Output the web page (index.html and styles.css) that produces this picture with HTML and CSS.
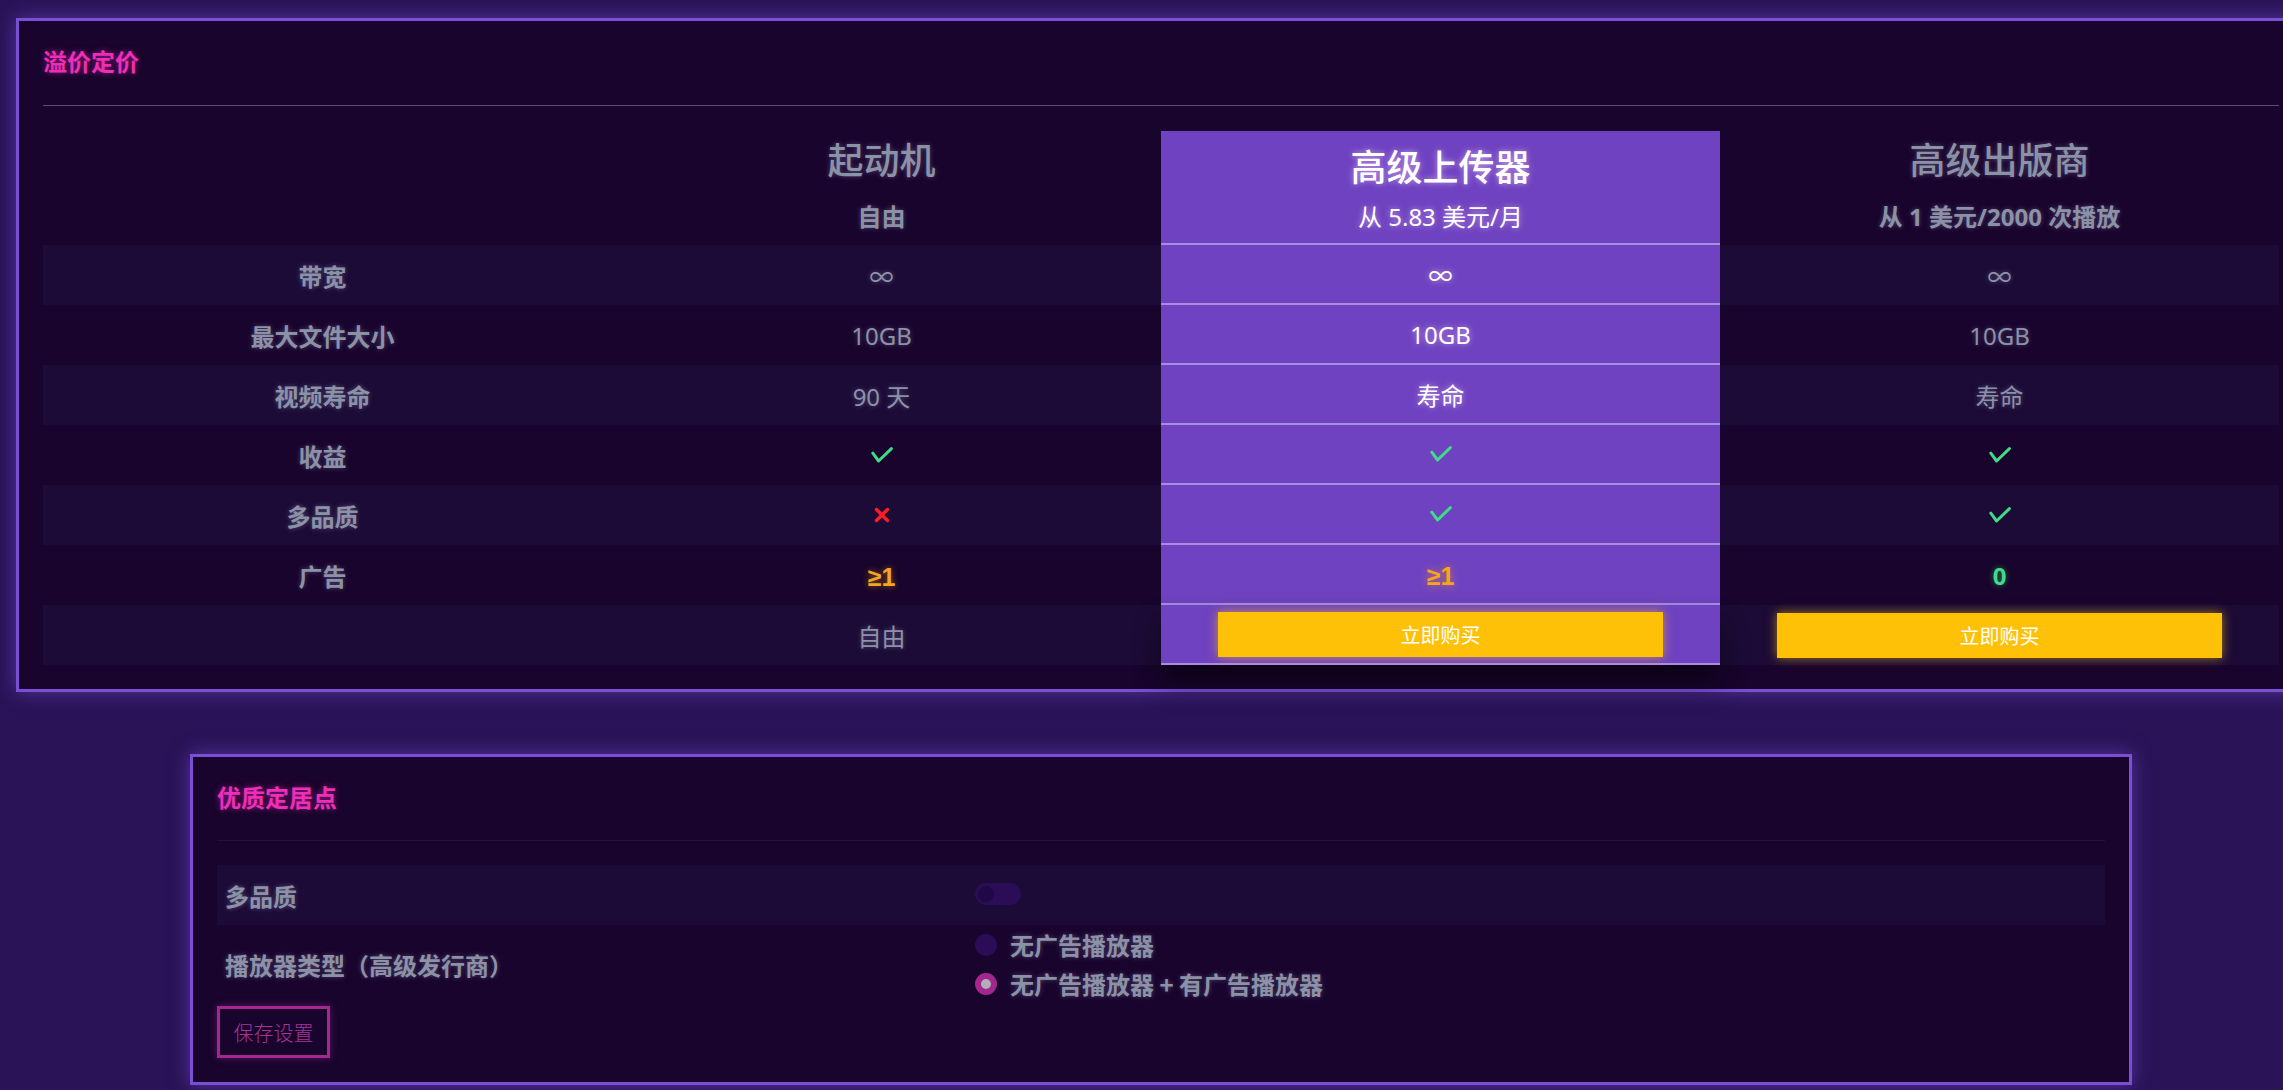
FILE: index.html
```html
<!DOCTYPE html>
<html lang="zh">
<head>
<meta charset="utf-8">
<title>溢价定价</title>
<link rel="stylesheet" href="styles.css">
</head>
<body>
<div class="page">
  <section class="card card-pricing">
    <h2 class="card-title">溢价定价</h2>
    <div class="divider"></div>
    <div class="pricing">
      <div class="prow prow-head">
        <div class="cell"></div>
        <div class="cell head">
          <div class="plan-name">起动机</div>
          <div class="plan-price bold">自由</div>
        </div>
        <div class="cell head hl">
          <div class="plan-name">高级上传器</div>
          <div class="plan-price">从 5.83 美元/月</div>
        </div>
        <div class="cell head">
          <div class="plan-name">高级出版商</div>
          <div class="plan-price bold">从 1 美元/2000 次播放</div>
        </div>
      </div>

      <div class="prow striped">
        <div class="cell label">带宽</div>
        <div class="cell">∞</div>
        <div class="cell hl">∞</div>
        <div class="cell">∞</div>
      </div>
      <div class="prow">
        <div class="cell label">最大文件大小</div>
        <div class="cell">10GB</div>
        <div class="cell hl">10GB</div>
        <div class="cell">10GB</div>
      </div>
      <div class="prow striped">
        <div class="cell label">视频寿命</div>
        <div class="cell">90 天</div>
        <div class="cell hl">寿命</div>
        <div class="cell">寿命</div>
      </div>
      <div class="prow">
        <div class="cell label">收益</div>
        <div class="cell"><svg class="ico-check" viewBox="0 0 22 16"><polyline points="1.8,6.2 7.6,14 20.4,1.6"/></svg></div>
        <div class="cell hl"><svg class="ico-check" viewBox="0 0 22 16"><polyline points="1.8,6.2 7.6,14 20.4,1.6"/></svg></div>
        <div class="cell"><svg class="ico-check" viewBox="0 0 22 16"><polyline points="1.8,6.2 7.6,14 20.4,1.6"/></svg></div>
      </div>
      <div class="prow striped">
        <div class="cell label">多品质</div>
        <div class="cell"><svg class="ico-x" viewBox="0 0 16 16"><path d="M2.5 2.5 L13.5 13.5 M13.5 2.5 L2.5 13.5"/></svg></div>
        <div class="cell hl"><svg class="ico-check" viewBox="0 0 22 16"><polyline points="1.8,6.2 7.6,14 20.4,1.6"/></svg></div>
        <div class="cell"><svg class="ico-check" viewBox="0 0 22 16"><polyline points="1.8,6.2 7.6,14 20.4,1.6"/></svg></div>
      </div>
      <div class="prow">
        <div class="cell label">广告</div>
        <div class="cell ads-warn">≥1</div>
        <div class="cell hl ads-warn">≥1</div>
        <div class="cell ads-ok">0</div>
      </div>
      <div class="prow striped last">
        <div class="cell"></div>
        <div class="cell">自由</div>
        <div class="cell hl"><button class="buy">立即购买</button></div>
        <div class="cell"><button class="buy">立即购买</button></div>
      </div>
    </div>
  </section>

  <section class="card card-settings">
    <h2 class="card-title">优质定居点</h2>
    <div class="divider faint"></div>
    <div class="srow striped">
      <div class="slabel">多品质</div>
      <div class="scontrol"><span class="toggle"><span class="knob"></span></span></div>
    </div>
    <div class="srow">
      <div class="slabel">播放器类型（高级发行商）</div>
      <div class="scontrol radios">
        <label class="radio"><span class="dot"></span>无广告播放器</label>
        <label class="radio"><span class="dot checked"></span>无广告播放器 + 有广告播放器</label>
      </div>
    </div>
    <button class="save">保存设置</button>
  </section>
</div>
</body>
</html>
```

FILE: styles.css
```css
html, body {
  margin: 0;
  padding: 0;
  overflow: hidden;
  height: 100%;
}

body {
  background: #2a1357;
  font-family: "Noto Sans", "Noto Sans CJK SC", sans-serif;
  color: #8b92a6;
}

.page {
  width: 2290px;
  margin-left: 16px;
  padding-top: 18px;
}

.card {
  box-sizing: border-box;
  background: #18042c;
  border: 3px solid #7a4fd4;
  box-shadow: 0 0 18px rgba(120, 80, 220, 0.55);
  padding: 22px 24px 24px;
}

.card-pricing {
  width: 2290px;
}

.card-settings {
  width: 1942px;
  margin: 62px auto 0;
}

.card-title {
  margin: 0;
  font-family: "Noto Sans CJK SC", sans-serif;
  font-size: 24px;
  line-height: 36px;
  font-weight: 700;
  color: #ee2db8;
  text-shadow: 0 0 6px rgba(238, 45, 184, 0.55);
}

.divider {
  height: 1px;
  background: rgba(255, 255, 255, 0.3);
  margin: 26px 0 25px;
}

.divider.faint {
  background: rgba(255, 255, 255, 0.06);
  margin: 25px 0 24px;
}

/* pricing table */
.pricing {
  width: 2236px;
}

.prow {
  display: grid;
  grid-template-columns: repeat(4, 559px);
  height: 60px;
}

.prow-head {
  height: 114px;
}

.striped {
  background: #1c0b36;
}

.cell {
  box-sizing: border-box;
  display: flex;
  align-items: center;
  justify-content: center;
  font-size: 24px;
  color: #8b92a6;
  text-shadow: 0 0 5px rgba(190, 190, 240, 0.35);
}

.cell.label {
  font-family: "Noto Sans CJK SC", sans-serif;
  font-weight: 700;
}

.cell.head {
  flex-direction: column;
  justify-content: flex-start;
  padding-top: 5px;
}

.plan-name {
  font-family: "Noto Sans CJK SC", sans-serif;
  font-size: 36px;
  line-height: 44px;
  font-weight: 500;
}

.plan-price {
  font-size: 24px;
  line-height: 36px;
  margin-top: 19px;
}

.plan-price.bold {
  font-weight: 700;
}

.cell.hl {
  background: #6f42c1;
  color: #ffffff;
  border-bottom: 2px solid #a88de0;
  text-shadow: 0 0 6px rgba(255, 220, 255, 0.6);
}

.cell.head.hl {
  padding-top: 12px;
}

.cell.head.hl .plan-price {
  margin-top: 12px;
}

.last .cell.hl {
  box-shadow: 0 18px 28px rgba(0, 0, 0, 0.45);
}

.ico-check {
  width: 22px;
  height: 16px;
  fill: none;
  stroke: #3fdc85;
  stroke-width: 3;
  stroke-linecap: round;
  stroke-linejoin: round;
}

.ico-x {
  width: 16px;
  height: 16px;
  fill: none;
  stroke: #ff1c24;
  stroke-width: 3.4;
  stroke-linecap: round;
}

.ads-warn {
  font-family: "Liberation Sans", sans-serif;
  font-size: 25px;
  color: #f7a51c;
  font-weight: 700;
  padding-top: 4px;
  text-shadow: 0 0 6px rgba(247, 165, 28, 0.55);
}

.cell.hl.ads-warn {
  color: #f7a51c;
  text-shadow: 0 0 8px rgba(247, 165, 28, 0.6);
}

.ads-ok {
  color: #3fdc85;
  font-weight: 700;
  text-shadow: 0 0 6px rgba(63, 220, 133, 0.5);
}

.buy {
  width: 445px;
  height: 45px;
  border: none;
  background: #ffc107;
  color: #ffffff;
  font-family: "Noto Sans CJK SC", sans-serif;
  font-size: 20px;
  box-shadow: 0 0 10px rgba(255, 193, 7, 0.6);
  cursor: pointer;
}

/* settings */
.srow {
  display: grid;
  grid-template-columns: 758px 1fr;
  align-items: center;
  min-height: 60px;
}

.slabel {
  padding-left: 8px;
  font-family: "Noto Sans CJK SC", sans-serif;
  font-size: 24px;
  font-weight: 700;
  color: #8b92a6;
  text-shadow: 0 0 5px rgba(190, 190, 240, 0.35);
}

.scontrol {
  display: flex;
  align-items: center;
}

.toggle {
  display: block;
  position: relative;
  width: 46px;
  height: 22px;
  border-radius: 11px;
  background: #2a0d56;
  margin-top: -3px;
}

.knob {
  position: absolute;
  left: 3px;
  top: 3px;
  width: 16px;
  height: 16px;
  border-radius: 50%;
  background: #1f0845;
}

.radios {
  flex-direction: column;
  align-items: flex-start;
}

.radio {
  display: flex;
  align-items: center;
  height: 39px;
  font-family: "Noto Sans CJK SC", sans-serif;
  font-size: 24px;
  font-weight: 700;
  color: #8b92a6;
  text-shadow: 0 0 5px rgba(190, 190, 240, 0.35);
}

.dot {
  box-sizing: border-box;
  width: 22px;
  height: 22px;
  border-radius: 50%;
  background: #2a0d56;
  margin-right: 13px;
  flex: none;
}

.dot.checked {
  background: #b0b0b8;
  border: 6px solid #a3278f;
}

.save {
  margin-top: 3px;
  box-sizing: border-box;
  width: 113px;
  height: 52px;
  background: transparent;
  border: 3px solid #a3278f;
  color: #a8349a;
  font-family: "Noto Sans CJK SC", sans-serif;
  font-size: 20px;
  font-weight: 300;
  padding: 0;
  box-shadow: 0 0 8px rgba(163, 39, 143, 0.45);
}
```
